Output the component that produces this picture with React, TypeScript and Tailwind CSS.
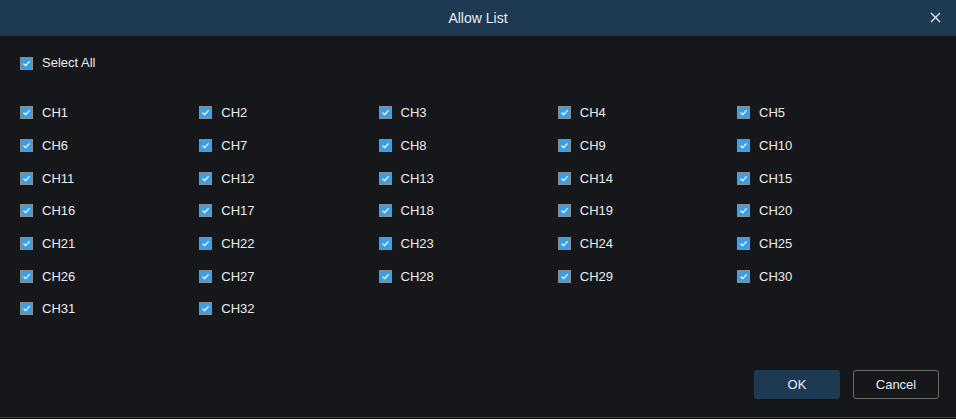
import React from "react";

function Box() {
  return (
    <span className="flex h-[13px] w-[13px] shrink-0 items-center justify-center border border-[#8c8c8c] bg-[#3c9ee3]">
      <svg width="9" height="9" viewBox="0 0 9 9" fill="none">
        <path d="M1.5 4.6 L3.6 6.6 L7.6 2.4" stroke="#ffffff" strokeWidth="1.3" />
      </svg>
    </span>
  );
}

export default function App() {
  const chs = Array.from({ length: 32 }, (_, i) => `CH${i + 1}`);
  return (
    <div
      className="flex h-[419px] w-[956px] flex-col bg-[#16171b] text-[13px] text-[#ececec]"
      style={{ fontFamily: '"Liberation Sans", Arial, sans-serif' }}
    >
      <div className="relative flex h-[36px] shrink-0 items-center justify-center bg-[#1e3a52]">
        <span className="text-[14px] text-[#e8eef3]">Allow List</span>
        <svg className="absolute right-[15px] top-[12px]" width="11" height="11" viewBox="0 0 11 11">
          <path d="M1 1 L10 10 M10 1 L1 10" stroke="#dce6ee" strokeWidth="1.4" />
        </svg>
      </div>
      <div className="flex-1 pl-[20px]">
        <div className="mt-[17px] flex h-[20px] items-center gap-[9px]">
          <Box />
          <span>Select All</span>
        </div>
        <div className="mt-[23.67px] grid grid-cols-[repeat(5,179.25px)] auto-rows-[32.67px]">
          {chs.map((c) => (
            <div key={c} className="flex items-center gap-[9px]">
              <Box />
              <span>{c}</span>
            </div>
          ))}
        </div>
      </div>
      <div className="flex shrink-0 justify-end gap-[13px] pb-[18px] pr-[17px]">
        <button className="h-[29px] w-[86px] rounded-[3px] bg-[#1e3a52] text-[13px] text-[#e8eef3]">OK</button>
        <button className="h-[29px] w-[86px] rounded-[3px] border border-[#6a6a6a] text-[13px] text-[#e8eef3]">Cancel</button>
      </div>
      <div className="h-px shrink-0 bg-[#2a4a60]" />
      <div className="h-px shrink-0 bg-[#0b0c0e]" />
    </div>
  );
}
